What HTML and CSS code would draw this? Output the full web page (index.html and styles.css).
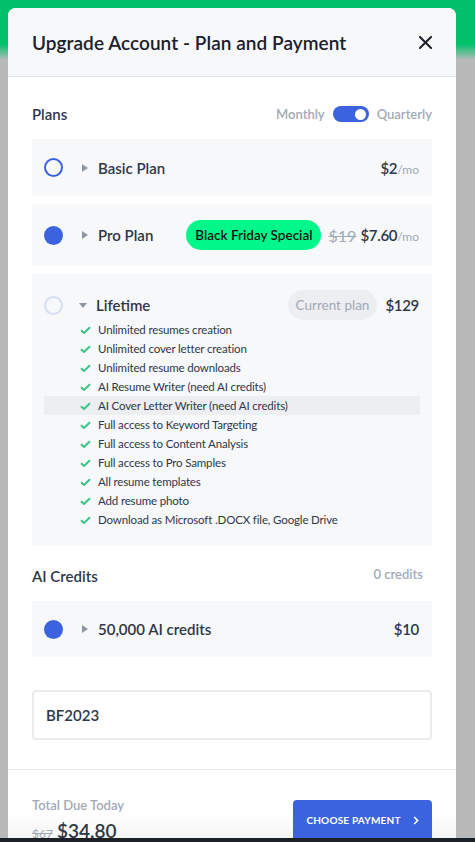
FILE: index.html
```html
<!DOCTYPE html>
<html lang="en">
<head>
<meta charset="utf-8">
<title>Upgrade Account</title>
<link rel="stylesheet" href="styles.css">
</head>
<body>
<div class="modal">
  <div class="modal-header">
    <h1 class="modal-title">Upgrade Account - Plan and Payment</h1>
    <button class="close-btn" aria-label="Close">
      <svg width="13" height="13" viewBox="0 0 13 13"><path d="M1 1L12 12M12 1L1 12" stroke="#1a202c" stroke-width="2" stroke-linecap="square"/></svg>
    </button>
  </div>
  <div class="modal-body">
    <div class="section-head">
      <span class="section-title">Plans</span>
      <div class="billing-toggle">
        <span class="toggle-label">Monthly</span>
        <span class="switch"><span class="knob"></span></span>
        <span class="toggle-label">Quarterly</span>
      </div>
    </div>

    <div class="plan-list">
      <div class="plan">
        <div class="plan-row">
          <span class="radio radio-empty"></span>
          <span class="caret-right"></span>
          <span class="plan-name">Basic Plan</span>
          <span class="spacer"></span>
          <span class="price">$2<span class="per">/mo</span></span>
        </div>
      </div>

      <div class="plan plan-pro">
        <div class="plan-row">
          <span class="radio radio-filled"></span>
          <span class="caret-right"></span>
          <span class="plan-name">Pro Plan</span>
          <span class="spacer"></span>
          <span class="badge-bf">Black Friday Special</span>
          <span class="old-price">$19</span>
          <span class="price">$7.60<span class="per">/mo</span></span>
        </div>
      </div>

      <div class="plan plan-lifetime">
        <div class="plan-row plan-row-tall">
          <span class="radio radio-disabled"></span>
          <span class="caret-down"></span>
          <span class="plan-name">Lifetime</span>
          <span class="spacer"></span>
          <span class="badge-current">Current plan</span>
          <span class="price">$129</span>
        </div>
        <ul class="features">
          <li><svg class="check" viewBox="0 0 11 8"><path d="M1 4.2L4 7L10 1.2" fill="none" stroke="#3cc58a" stroke-width="2"/></svg>Unlimited resumes creation</li>
          <li><svg class="check" viewBox="0 0 11 8"><path d="M1 4.2L4 7L10 1.2" fill="none" stroke="#3cc58a" stroke-width="2"/></svg>Unlimited cover letter creation</li>
          <li><svg class="check" viewBox="0 0 11 8"><path d="M1 4.2L4 7L10 1.2" fill="none" stroke="#3cc58a" stroke-width="2"/></svg>Unlimited resume downloads</li>
          <li><svg class="check" viewBox="0 0 11 8"><path d="M1 4.2L4 7L10 1.2" fill="none" stroke="#3cc58a" stroke-width="2"/></svg>AI Resume Writer (need AI credits)</li>
          <li class="hl"><svg class="check" viewBox="0 0 11 8"><path d="M1 4.2L4 7L10 1.2" fill="none" stroke="#3cc58a" stroke-width="2"/></svg>AI Cover Letter Writer (need AI credits)</li>
          <li><svg class="check" viewBox="0 0 11 8"><path d="M1 4.2L4 7L10 1.2" fill="none" stroke="#3cc58a" stroke-width="2"/></svg>Full access to Keyword Targeting</li>
          <li><svg class="check" viewBox="0 0 11 8"><path d="M1 4.2L4 7L10 1.2" fill="none" stroke="#3cc58a" stroke-width="2"/></svg>Full access to Content Analysis</li>
          <li><svg class="check" viewBox="0 0 11 8"><path d="M1 4.2L4 7L10 1.2" fill="none" stroke="#3cc58a" stroke-width="2"/></svg>Full access to Pro Samples</li>
          <li><svg class="check" viewBox="0 0 11 8"><path d="M1 4.2L4 7L10 1.2" fill="none" stroke="#3cc58a" stroke-width="2"/></svg>All resume templates</li>
          <li><svg class="check" viewBox="0 0 11 8"><path d="M1 4.2L4 7L10 1.2" fill="none" stroke="#3cc58a" stroke-width="2"/></svg>Add resume photo</li>
          <li><svg class="check" viewBox="0 0 11 8"><path d="M1 4.2L4 7L10 1.2" fill="none" stroke="#3cc58a" stroke-width="2"/></svg>Download as Microsoft .DOCX file, Google Drive</li>
        </ul>
      </div>
    </div>

    <div class="section-head section-head-credits">
      <span class="section-title">AI Credits</span>
      <span class="credits-count">0 credits</span>
    </div>

    <div class="plan">
      <div class="plan-row plan-row-credits">
        <span class="radio radio-filled"></span>
        <span class="caret-right"></span>
        <span class="plan-name">50,000 AI credits</span>
        <span class="spacer"></span>
        <span class="price">$10</span>
      </div>
    </div>

    <div class="coupon">BF2023</div>
  </div>

  <div class="modal-footer">
    <div class="total">
      <div class="total-label">Total Due Today</div>
      <div class="total-amount"><span class="total-old">$67</span><span class="total-new">$34.80</span></div>
    </div>
    <button class="pay-btn">CHOOSE PAYMENT
      <svg width="6" height="9" viewBox="0 0 6 9"><path d="M1.2 1L4.6 4.5L1.2 8" fill="none" stroke="#fff" stroke-width="1.6"/></svg>
    </button>
  </div>
</div>
<div class="bottom-bar"></div>
</body>
</html>
```

FILE: styles.css
```css
* { box-sizing: border-box; }

html, body {
  margin: 0;
  padding: 0;
  height: 842px;
  overflow: hidden;
}

body {
  font-family: "Lato", "Noto Sans", sans-serif;
  color: #2d3748;
  background: linear-gradient(180deg, #00c16a 0px, #00c16a 44px, #b9b9b9 60px, #b9b9b9 100%);
  padding-top: 8px;
}

.modal {
  margin-left: 8px;
  width: 448px;
  background: #ffffff;
  border-radius: 8px 8px 0 0;
  overflow: hidden;
}

.modal-header {
  height: 69px;
  padding: 0 24px;
  display: flex;
  align-items: center;
  justify-content: space-between;
  background: #f7f8fa;
  border-bottom: 1px solid #dfe5ec;
}

.modal-title {
  margin: 0;
  font-size: 19px;
  font-weight: 600;
  color: #1a202c;
  letter-spacing: 0.05px;
}

.close-btn {
  border: 0;
  background: none;
  padding: 0;
  width: 13px;
  height: 13px;
  display: flex;
}

.modal-body {
  padding: 26px 24px 29px;
}

.section-head {
  display: flex;
  align-items: center;
  justify-content: space-between;
  height: 22px;
  margin-bottom: 14px;
}

.section-title {
  font-size: 15px;
  font-weight: 600;
  color: #2d3748;
}

.billing-toggle {
  display: flex;
  align-items: center;
  gap: 8px;
}

.toggle-label {
  font-size: 13px;
  font-weight: 600;
  color: #a0aab8;
}

.switch {
  width: 36px;
  height: 16px;
  border-radius: 8px;
  background: #3b63e0;
  display: flex;
  align-items: center;
  justify-content: flex-end;
  padding: 0 3px;
}

.knob {
  width: 11px;
  height: 11px;
  border-radius: 50%;
  background: #fff;
}

.plan-list {
  display: flex;
  flex-direction: column;
  gap: 8px;
}

.plan {
  background: #f7f8fa;
}

.plan-row {
  display: flex;
  align-items: center;
  height: 57px;
  padding: 0 13px 0 12px;
}

.plan-pro .plan-row { height: 62px; }

.plan-row-tall {
  height: auto;
  padding-top: 16px;
}

.plan-row-credits { height: 56px; }

.radio {
  width: 19px;
  height: 19px;
  border-radius: 50%;
  flex: none;
}

.radio-empty { border: 2px solid #3b63e0; }
.radio-filled { background: #3b63e0; }
.radio-disabled { border: 2px solid #d5ddf5; }

.caret-right {
  width: 0;
  height: 0;
  border-top: 4.5px solid transparent;
  border-bottom: 4.5px solid transparent;
  border-left: 6px solid #8f96a3;
  margin-left: 19px;
  margin-right: 10px;
}

.caret-down {
  width: 0;
  height: 0;
  border-left: 4.5px solid transparent;
  border-right: 4.5px solid transparent;
  border-top: 5px solid #8f96a3;
  margin-left: 16px;
  margin-right: 9px;
}

.plan-name {
  font-size: 15px;
  font-weight: 600;
  color: #2d3748;
}

.spacer { flex: 1; }

.price {
  font-size: 15px;
  font-weight: 600;
  letter-spacing: -0.3px;
  color: #2d3748;
}

.per {
  font-size: 12px;
  font-weight: 400;
  letter-spacing: 0;
  color: #a0aab8;
}

.badge-bf {
  background: #02f78b;
  color: #111;
  font-size: 13.5px;
  font-weight: 600;
  height: 30px;
  padding: 0 8px 0 9px;
  border-radius: 15px;
  display: flex;
  align-items: center;
  margin-right: 8px;
}

.old-price {
  font-size: 16px;
  color: #a0aab8;
  text-decoration: line-through;
  margin-right: 4px;
}

.badge-current {
  background: #eceef1;
  color: #a0aab8;
  font-size: 13.5px;
  height: 30px;
  padding: 0 8px;
  border-radius: 15px;
  display: flex;
  align-items: center;
  margin-right: 8px;
}

.features {
  list-style: none;
  margin: 0;
  padding: 0 12px 17px;
}

.features li {
  display: flex;
  align-items: center;
  height: 19px;
  padding-left: 36px;
  font-size: 11.5px;
  letter-spacing: -0.15px;
  color: #2d3748;
}

.features li.hl { background: #eceef1; }

.check {
  width: 11px;
  height: 8px;
  margin-right: 7px;
  flex: none;
}

.section-head-credits {
  margin-top: 19px;
  margin-bottom: 14px;
}

.credits-count {
  font-size: 13px;
  font-weight: 600;
  color: #a0aab8;
  margin-right: 9px;
  margin-top: -4px;
}

.coupon {
  margin-top: 33px;
  height: 50px;
  border: 2px solid #ebebeb;
  border-radius: 4px;
  padding: 0 12px;
  display: flex;
  align-items: center;
  font-size: 15px;
  font-weight: 600;
  color: #2d3748;
}

.modal-footer {
  border-top: 1px solid #e9ecef;
  padding: 30px 24px 0;
  height: 80px;
  display: flex;
  justify-content: space-between;
  align-items: flex-start;
  background: linear-gradient(180deg, #ffffff 0%, #ffffff 55%, #f0f0f0 100%);
}

.total-label {
  font-size: 13px;
  font-weight: 600;
  color: #a0aab8;
  margin-top: -3px;
}

.total-amount {
  display: flex;
  align-items: baseline;
  gap: 4px;
  margin-top: 6px;
}

.total-old {
  font-size: 12px;
  color: #a0aab8;
  text-decoration: line-through;
}

.total-new {
  font-size: 19px;
  font-weight: 600;
  color: #2d3748;
}

.pay-btn {
  width: 139px;
  height: 46px;
  border: 0;
  border-radius: 4px;
  background: #3b63df;
  color: #ffffff;
  font-family: inherit;
  font-size: 10px;
  font-weight: 700;
  letter-spacing: 0.2px;
  display: flex;
  align-items: center;
  justify-content: center;
  gap: 12px;
  padding: 0 0 6px;
}

.bottom-bar {
  position: fixed;
  left: 0;
  right: 0;
  bottom: 0;
  height: 4px;
  background: #1b2026;
}
```
